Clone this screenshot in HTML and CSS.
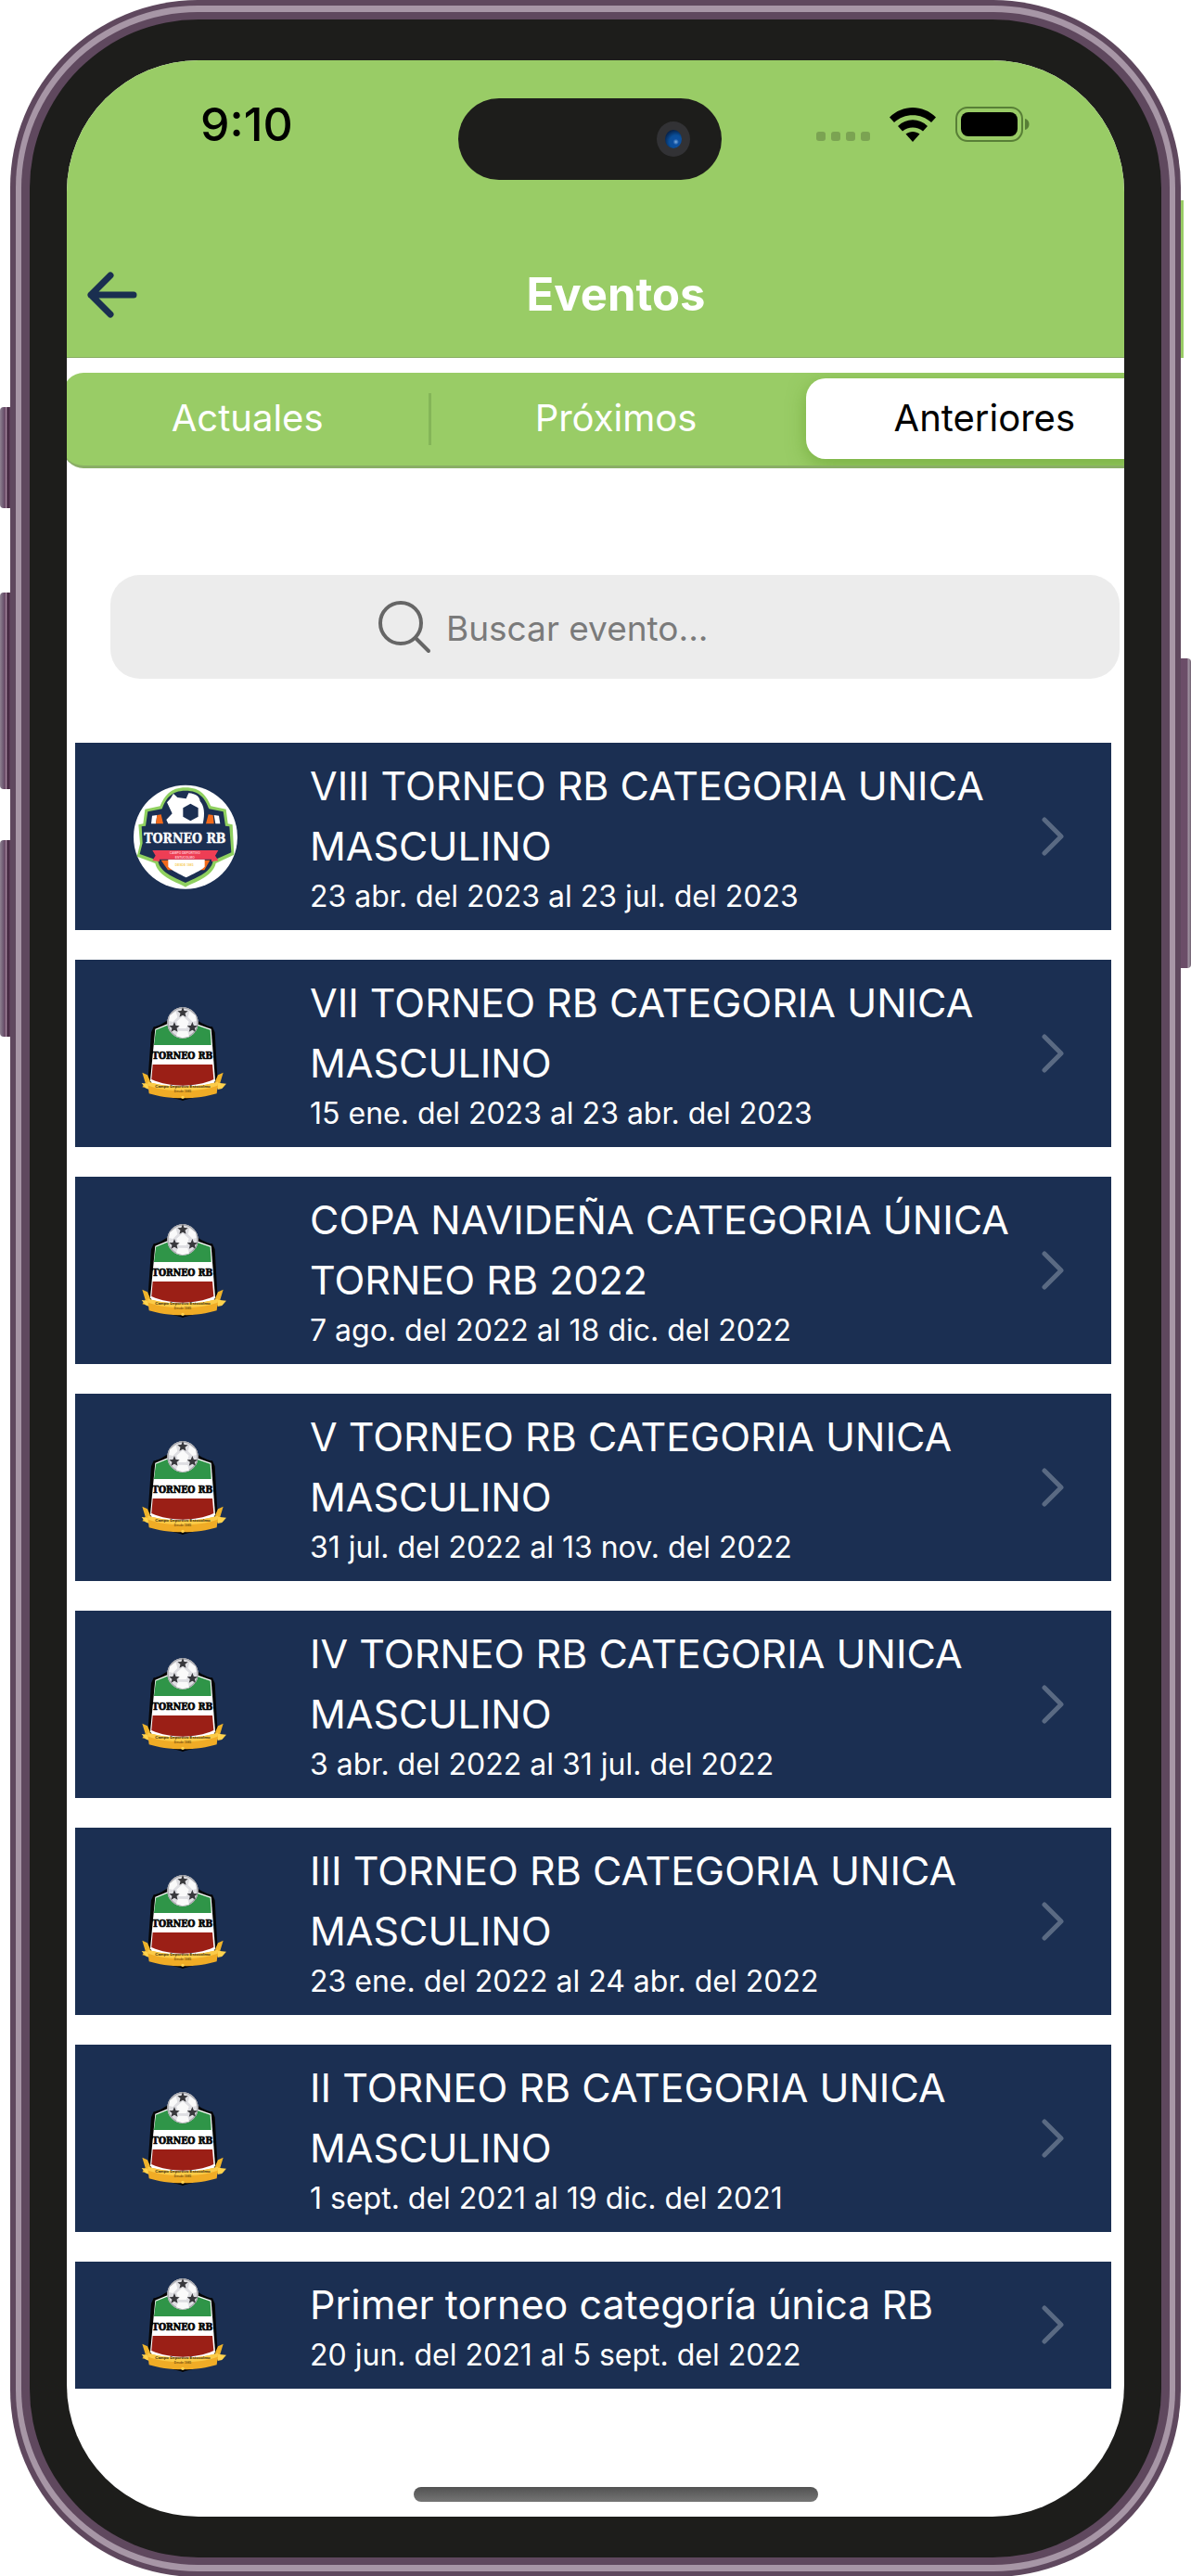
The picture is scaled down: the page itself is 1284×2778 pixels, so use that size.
FILE: index.html
```html
<!DOCTYPE html>
<html lang="es">
<head>
    <meta charset="UTF-8">
    <meta name="viewport" content="width=device-width, initial-scale=1.0">
    <title>Torneo RB - Eventos</title>
    <link rel="stylesheet" href="styles.css">
</head>
<body>
    <!-- Shared shapes -->
    <svg class="sprites" aria-hidden="true">
        <symbol id="chevron" viewBox="0 0 24 42">
            <path d="M3 3l18 18L3 39" fill="none" stroke="#5a6a83" stroke-width="5" stroke-linecap="round" stroke-linejoin="round"/>
        </symbol>

        <symbol id="star" viewBox="-10 -10 20 20">
            <path d="M0-10L2.6-3.4 9.5-3.1 4.2 1.4 5.9 8.1 0 4.4-5.9 8.1-4.2 1.4-9.5-3.1-2.6-3.4z" fill="#38383c"/>
        </symbol>

        <g id="badge-new">
            <circle cx="180" cy="188" r="168" fill="#fff"/>
            <path d="M180 350C158 336 92 318 82 273L23 251 33 210 28 148 43 145 49 98 98 88C112 56 130 28 180 28S248 56 262 88L311 98 317 145 332 148 337 245 278 273C268 318 202 336 180 350z" fill="#8fd05f"/>
            <path d="M180 336C158 324 96 306 91 264L32 243 41 208 38 154 51 152 58 106 104 97C116 64 134 38 180 38S244 64 256 97L302 106 309 152 322 154 328 238 269 264C264 306 202 324 180 336z" fill="#1b2f52"/>
            <path d="M72 119l16-2-4 28H69zM272 117l16 2 4 26h-15z" fill="#fff"/>
            <path d="M88 117l13-2 7 30H84zM246 145l8-30 15 2 3 28z" fill="#f26a1b"/>
            <path d="M120 76C135 62 138 50 141 48L154 60 182 64 190 46C214 48 226 58 227 72 240 86 244 112 236 145H124L118 132 137 112z" fill="#fff"/>
            <path d="M196 80l25 14v28l-25 14-24-14V94z" fill="#1b2f52"/>
            <path d="M101 263h158l-18 32H123z" fill="#f26a1b"/>
            <path d="M124 260h118v24c-14 15-38 22-60 35-22-13-44-20-58-35z" fill="#fff"/>
            <path d="M73 231h213l-10 17 10 16-22 3v-7H96v7l-23-3 10-16z" fill="#ee3e55"/>
        </g>

        <g id="badge-old">
            <path d="M77 112C92 110 112 98 124 89H214C230 98 246 109 267 112L275 130 284 292 265 326 171 350 78 326 58 292 69 130z" fill="#050505"/>
            <path d="M82 119L125 101H212L263 119 276 286 260 320 171 346 84 320 66 286z" fill="#fff"/>
            <path d="M84 122L128 104H208L260 122 263 171H78z" fill="#2f9548"/>
            <path d="M74 234H267L271 282C240 296 206 302 171 302S102 296 70 282z" fill="#9b1f16"/>
            <circle cx="171" cy="99" r="50" fill="#dedee2"/>
            <circle cx="171" cy="99" r="48" fill="none" stroke="#a8a8ad" stroke-width="4"/>
            <path d="M171 78l20 17-8 22h-24l-8-22zM129 76l20-14 5 19-15 15-12-3zM213 76l-20-14-5 19 15 15 12-3zM155 125l32 1 5 17-22 5-20-6z" fill="#fafafa"/>
            <use href="#star" x="153" y="48" width="36" height="36"/>
            <use href="#star" x="126" y="96" width="36" height="36"/>
            <use href="#star" x="184" y="96" width="36" height="36"/>
            <path d="M40 260l17 8 8 18 3 27-28-6 10-14zM302 260l-17 8-8 18-3 27 28-6-10-14z" fill="#efb32b"/>
            <path d="M38 294l24 3v18l-12-5zM312 296l-28-3v22l14-3z" fill="#ffd24e"/>
            <path d="M57 289C92 301 130 305 171 305S252 301 286 289L281 328C250 337 214 343 171 343S92 337 62 328z" fill="#f0ac26"/>
            <path d="M57 289C92 301 130 305 171 305S252 301 286 289L284 302C252 313 214 319 171 319S92 313 59 302z" fill="#fbcb48"/>
            <path d="M158 343h26l-13 8z" fill="#050505"/>
            <circle cx="171" cy="340" r="5" fill="#ffd24e"/>
        </g>
    </svg>

    <div class="phone">
        <span class="key key-mute"></span>
        <span class="key key-up"></span>
        <span class="key key-down"></span>
        <span class="key key-power"></span>

        <div class="rim">
            <div class="rim-inner">
                <div class="bezel">
                    <div class="screen">
                        <div class="island">
                            <span class="camera"></span>
                        </div>

                        <div class="app">
                            <div class="status-bar">
                                <span class="time">9:10</span>
                                <div class="status-icons">
                                    <span class="signal"><i></i><i></i><i></i><i></i></span>
                                    <svg class="wifi" viewBox="0 0 50 37" aria-hidden="true">
                                        <path d="M0 10.500C14-3.500 36-3.500 50 10.500L45 16C34 5.500 16 5.500 5 16z"/>
                                        <path d="M9 20C18 11 32 11 41 20L36 25.500C30 20 20 20 14 25.500z"/>
                                        <path d="M17.500 28.500C22 25 28 25 32.500 28.500L25 37z"/>
                                    </svg>
                                    <svg class="battery" viewBox="0 0 80 38" aria-hidden="true">
                                        <rect x="1" y="1" width="71" height="36" rx="12" fill="none" stroke="#587f36" stroke-width="2"/>
                                        <rect x="6" y="6" width="61" height="26" rx="8"/>
                                        <path d="M75 13c6 1 6 11 0 12z" fill="#587f36"/>
                                    </svg>
                                </div>
                            </div>

                            <header class="header">
                                <button class="back" type="button" aria-label="Volver">
                                    <svg viewBox="0 0 54 50" aria-hidden="true">
                                        <path d="M25 4L4 25l21 21M4 25h46" fill="none" stroke="#1a2f50" stroke-width="7" stroke-linecap="round" stroke-linejoin="round"/>
                                    </svg>
                                </button>
                                <h1>Eventos</h1>
                            </header>

                            <nav class="tabs">
                                <button class="tab" type="button">Actuales</button>
                                <button class="tab" type="button">Próximos</button>
                                <button class="tab active" type="button" aria-current="true">Anteriores</button>
                            </nav>

                            <div class="search">
                                <label for="search-input" aria-label="Buscar evento">
                                    <svg viewBox="0 0 57 58" aria-hidden="true">
                                        <circle cx="24" cy="25" r="22" fill="none" stroke="#666" stroke-width="4"/>
                                        <path d="M40 41l14 14" stroke="#666" stroke-width="4" stroke-linecap="round"/>
                                    </svg>
                                </label>
                                <input type="text" id="search-input" placeholder="Buscar evento...">
                            </div>

                            <ul class="events">
                                <li>
                                    <a href="#" class="event">
                                        <svg class="badge" viewBox="0 6 360 360">
                                            <use href="#badge-new"/>
                                            <text class="badge-title light" x="178" y="208">TORNEO RB</text>
                                            <text class="badge-note pale" x="178" y="244">CAMPO DEPORTIVO</text>
                                            <text class="badge-note pale" x="178" y="257">ESTUCOLMO</text>
                                            <text class="badge-note gold" x="176" y="283">DESDE 1985</text>
                                        </svg>
                                        <div class="event-text">
                                            <h2>VIII TORNEO RB CATEGORIA UNICA MASCULINO</h2>
                                            <p>23 abr. del 2023 al 23 jul. del 2023</p>
                                        </div>
                                        <svg class="chevron" aria-hidden="true"><use href="#chevron"/></svg>
                                    </a>
                                </li>
                                <li>
                                    <a href="#" class="event">
                                        <svg class="badge" viewBox="0 18 360 360">
                                            <use href="#badge-old"/>
                                            <text class="badge-title dark" x="170" y="215">TORNEO RB</text>
                                            <text class="badge-ribbon" x="171" y="310">Campo Deportivo Estocolmo</text>
                                            <text class="badge-note ink" x="171" y="325">Desde 1985</text>
                                        </svg>
                                        <div class="event-text">
                                            <h2>VII TORNEO RB CATEGORIA UNICA MASCULINO</h2>
                                            <p>15 ene. del 2023 al 23 abr. del 2023</p>
                                        </div>
                                        <svg class="chevron" aria-hidden="true"><use href="#chevron"/></svg>
                                    </a>
                                </li>
                                <li>
                                    <a href="#" class="event">
                                        <svg class="badge" viewBox="0 18 360 360">
                                            <use href="#badge-old"/>
                                            <text class="badge-title dark" x="170" y="215">TORNEO RB</text>
                                            <text class="badge-ribbon" x="171" y="310">Campo Deportivo Estocolmo</text>
                                            <text class="badge-note ink" x="171" y="325">Desde 1985</text>
                                        </svg>
                                        <div class="event-text">
                                            <h2>COPA NAVIDEÑA CATEGORIA ÚNICA TORNEO RB 2022</h2>
                                            <p>7 ago. del 2022 al 18 dic. del 2022</p>
                                        </div>
                                        <svg class="chevron" aria-hidden="true"><use href="#chevron"/></svg>
                                    </a>
                                </li>
                                <li>
                                    <a href="#" class="event">
                                        <svg class="badge" viewBox="0 18 360 360">
                                            <use href="#badge-old"/>
                                            <text class="badge-title dark" x="170" y="215">TORNEO RB</text>
                                            <text class="badge-ribbon" x="171" y="310">Campo Deportivo Estocolmo</text>
                                            <text class="badge-note ink" x="171" y="325">Desde 1985</text>
                                        </svg>
                                        <div class="event-text">
                                            <h2>V TORNEO RB CATEGORIA UNICA MASCULINO</h2>
                                            <p>31 jul. del 2022 al 13 nov. del 2022</p>
                                        </div>
                                        <svg class="chevron" aria-hidden="true"><use href="#chevron"/></svg>
                                    </a>
                                </li>
                                <li>
                                    <a href="#" class="event">
                                        <svg class="badge" viewBox="0 18 360 360">
                                            <use href="#badge-old"/>
                                            <text class="badge-title dark" x="170" y="215">TORNEO RB</text>
                                            <text class="badge-ribbon" x="171" y="310">Campo Deportivo Estocolmo</text>
                                            <text class="badge-note ink" x="171" y="325">Desde 1985</text>
                                        </svg>
                                        <div class="event-text">
                                            <h2>IV TORNEO RB CATEGORIA UNICA MASCULINO</h2>
                                            <p>3 abr. del 2022 al 31 jul. del 2022</p>
                                        </div>
                                        <svg class="chevron" aria-hidden="true"><use href="#chevron"/></svg>
                                    </a>
                                </li>
                                <li>
                                    <a href="#" class="event">
                                        <svg class="badge" viewBox="0 18 360 360">
                                            <use href="#badge-old"/>
                                            <text class="badge-title dark" x="170" y="215">TORNEO RB</text>
                                            <text class="badge-ribbon" x="171" y="310">Campo Deportivo Estocolmo</text>
                                            <text class="badge-note ink" x="171" y="325">Desde 1985</text>
                                        </svg>
                                        <div class="event-text">
                                            <h2>III TORNEO RB CATEGORIA UNICA MASCULINO</h2>
                                            <p>23 ene. del 2022 al 24 abr. del 2022</p>
                                        </div>
                                        <svg class="chevron" aria-hidden="true"><use href="#chevron"/></svg>
                                    </a>
                                </li>
                                <li>
                                    <a href="#" class="event">
                                        <svg class="badge" viewBox="0 18 360 360">
                                            <use href="#badge-old"/>
                                            <text class="badge-title dark" x="170" y="215">TORNEO RB</text>
                                            <text class="badge-ribbon" x="171" y="310">Campo Deportivo Estocolmo</text>
                                            <text class="badge-note ink" x="171" y="325">Desde 1985</text>
                                        </svg>
                                        <div class="event-text">
                                            <h2>II TORNEO RB CATEGORIA UNICA MASCULINO</h2>
                                            <p>1 sept. del 2021 al 19 dic. del 2021</p>
                                        </div>
                                        <svg class="chevron" aria-hidden="true"><use href="#chevron"/></svg>
                                    </a>
                                </li>
                                <li>
                                    <a href="#" class="event">
                                        <svg class="badge" viewBox="0 18 360 360">
                                            <use href="#badge-old"/>
                                            <text class="badge-title dark" x="170" y="215">TORNEO RB</text>
                                            <text class="badge-ribbon" x="171" y="310">Campo Deportivo Estocolmo</text>
                                            <text class="badge-note ink" x="171" y="325">Desde 1985</text>
                                        </svg>
                                        <div class="event-text">
                                            <h2>Primer torneo categoría única RB</h2>
                                            <p>20 jun. del 2021 al 5 sept. del 2022</p>
                                        </div>
                                        <svg class="chevron" aria-hidden="true"><use href="#chevron"/></svg>
                                    </a>
                                </li>
                            </ul>

                            <div class="home-indicator"></div>
                        </div>
                    </div>
                </div>
            </div>
        </div>
    </div>
</body>
</html>
```
FILE: styles.css
```css
* {
    box-sizing: border-box;
}

body {
    font-family: Inter, 'Liberation Sans', sans-serif;
    background-color: #fff;
    margin: 0;
    padding: 0 11px;
}

h1, h2, p, ul {
    margin: 0;
    padding: 0;
    font-weight: 400;
}

button {
    border: none;
    background: none;
    padding: 0;
    font-family: inherit;
    cursor: pointer;
}

svg {
    display: block;
}

.sprites {
    position: absolute;
    width: 0;
    height: 0;
}

/* Phone body */
.phone {
    position: relative;
    padding: 6px;
    background-color: #5f485e;
    border-radius: 202px;
}

/* edge of the header that shows past the frame */
.phone::after {
    content: "";
    position: absolute;
    top: 216px;
    right: -3px;
    width: 3px;
    height: 170px;
    background-color: #99cc66;
}

.rim {
    padding: 7px 6px;
    background-color: #a796a6;
    border-radius: 196px;
}

.rim-inner {
    padding: 8px 9px;
    background-color: #5f485e;
    border-radius: 190px;
}

.bezel {
    padding: 44px 40px;
    background-color: #1d1d1b;
    border-radius: 182px;
}

.screen {
    position: relative;
    overflow: hidden;
    background-color: #fff;
    border-radius: 142px;
}

.key {
    position: absolute;
    left: -11px;
    width: 11px;
    height: 212px;
    border-radius: 4px 0 0 4px;
    background: linear-gradient(to right, #8d8090, #6c5670 35%, #6b4a66 50%, #a98ba3 60%, #3b2038 75%, #5f3f5b);
}

.key-mute {
    top: 439px;
    height: 109px;
}

.key-up {
    top: 639px;
}

.key-down {
    top: 906px;
}

.key-power {
    top: 710px;
    left: auto;
    right: -11px;
    height: 334px;
    border-radius: 0 4px 4px 0;
    background: linear-gradient(to right, #6b4d68 60%, #a193a2 75%, #6f6070);
}

.island {
    position: absolute;
    top: 41px;
    left: 37%;
    width: 284px;
    height: 88px;
    padding-right: 34px;
    display: flex;
    align-items: center;
    justify-content: flex-end;
    background-color: #1d1d1b;
    border-radius: 44px;
}

.camera {
    width: 36px;
    height: 38px;
    border: 9px solid #323235;
    border-radius: 50%;
    background: radial-gradient(circle at 65% 65%, #7fb0e4 0, #0d4fa0 18%, #0a4f9a 40%, #06224a 75%);
}

/* The app is a little wider than the visible screen */
.app {
    margin: 0 -48px 0 -4px;
}

.status-bar {
    display: flex;
    align-items: center;
    justify-content: space-between;
    height: 138px;
    padding: 0 150px 0 148px;
    background-color: #99cc66;
}

.time {
    font-size: 50px;
    font-weight: 500;
    color: #000;
}

.status-icons {
    display: flex;
    align-items: center;
    gap: 21px;
}

.signal {
    display: flex;
    gap: 6px;
    padding-top: 26px;
}

.signal i {
    width: 10px;
    height: 10px;
    border-radius: 3px;
    background-color: #7ba352;
}

.wifi {
    width: 50px;
    height: 37px;
}

.battery {
    width: 80px;
    height: 38px;
}

.header {
    display: grid;
    grid-template-columns: 1fr auto 1fr;
    align-items: center;
    padding: 86px 26px 38px;
    background-color: #99cc66;
    border-bottom: 1px solid #8aae66;
}

.header h1 {
    font-size: 49px;
    line-height: 58px;
    font-weight: 700;
    color: #fff;
}

.back {
    width: 54px;
    height: 50px;
}

.tabs {
    display: grid;
    grid-template-columns: 1fr 1fr 1fr;
    margin-top: 16px;
    padding: 6px 0 7px;
    background-color: #99cc66;
    border-bottom: 3px solid #8aae66;
    border-radius: 22px;
    overflow: hidden;
}

.tab {
    height: 87px;
    padding-bottom: 2px;
    font-size: 40px;
    color: #fff;
}

.tab:first-child {
    background: linear-gradient(#84b558, #84b558) no-repeat right center / 3px 56px;
}

.tab.active {
    margin: 0 6px;
    color: #000;
    background-color: #fff;
    border-radius: 21px;
    box-shadow: 0 6px 20px rgba(90, 150, 30, 0.5);
}

.search {
    display: flex;
    align-items: center;
    gap: 16px;
    height: 112px;
    margin: 115px 53px 0 51px;
    padding-left: 289px;
    background-color: #ececec;
    border-radius: 32px;
}

.search svg {
    width: 57px;
    height: 58px;
}

.search input {
    flex: 1;
    min-width: 0;
    border: none;
    outline: none;
    padding: 2px 0 0;
    background: none;
    font-family: inherit;
    font-size: 37px;
    color: #333;
}

.search input::placeholder {
    color: #7a7a7a;
}

.events {
    display: grid;
    gap: 32px;
    margin: 69px 62px 0 13px;
    list-style: none;
}

.event {
    display: flex;
    align-items: center;
    padding: 14px 51px 15px 59px;
    background-color: #1b2f52;
    color: #fff;
    text-decoration: none;
}

/* logos may be taller than a single line event */
.badge {
    flex: none;
    width: 120px;
    height: 120px;
    margin: -10px 0;
}

.event-text {
    flex: 1;
    padding: 0 20px 0 74px;
}

.event-text h2 {
    font-size: 43px;
    line-height: 65px;
}

.event-text p {
    font-size: 32px;
    line-height: 43px;
}

.chevron {
    flex: none;
    width: 24px;
    height: 42px;
}

.badge-title {
    font-family: 'DejaVu Serif Condensed', 'DejaVu Serif', serif;
    font-weight: 700;
    text-anchor: middle;
}

.badge-title.light {
    font-size: 42px;
    fill: #fff;
    stroke: #fff;
}

.badge-title.dark {
    font-size: 31px;
    fill: #050505;
    stroke: #050505;
    stroke-width: 2px;
}

.badge-note {
    font-family: 'Liberation Sans', sans-serif;
    font-size: 10px;
    font-weight: 700;
    text-anchor: middle;
}

.badge-note.pale {
    fill: #ffc4cc;
}

.badge-note.gold {
    fill: #f7cf5c;
}

.badge-note.ink {
    fill: #7a5310;
}

.badge-ribbon {
    font-family: 'Liberation Sans', sans-serif;
    font-size: 13px;
    font-weight: 700;
    text-anchor: middle;
    fill: #2d2208;
}

.home-indicator {
    width: 436px;
    height: 16px;
    margin: 106px auto 16px;
    border-radius: 8px;
    background: linear-gradient(#525252, #757575);
}
```
